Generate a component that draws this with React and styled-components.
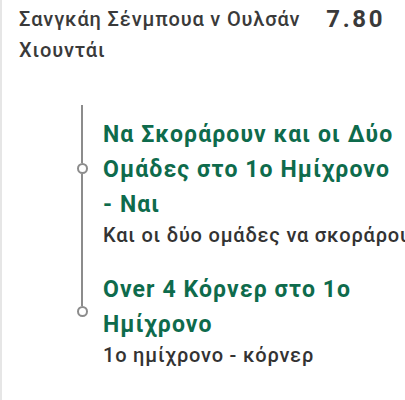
import styled, { createGlobalStyle } from 'styled-components';

const GlobalStyle = createGlobalStyle`
  html, body {
    margin: 0;
    padding: 0;
    background: #ffffff;
    overflow-x: hidden;
  }
  body {
    font-family: Roboto, "Noto Sans", "Liberation Sans", sans-serif;
  }
`;

const Page = styled.div`
  min-height: 400px;
  border-left: 2px solid #e6e6e6;
  box-sizing: border-box;
`;

const Header = styled.div`
  display: flex;
  align-items: flex-start;
  gap: 12px;
  padding: 4px 20px 0 17px;
`;

const Match = styled.div`
  flex: 1;
  font-size: 20px;
  line-height: 31px;
  letter-spacing: 0.85px;
  font-weight: 500;
  color: #3a3a3a;
`;

const Odds = styled.div`
  font-size: 24px;
  line-height: 31px;
  letter-spacing: 2.6px;
  font-weight: 700;
  color: #3a3a3a;
`;

const Timeline = styled.div`
  margin-top: 39px;
  padding-left: 75px;
`;

const Item = styled.div`
  display: grid;
  grid-template-columns: 10px 1fr;
  column-gap: 16px;
`;

const Rail = styled.div`
  display: flex;
  flex-direction: column;
  align-items: center;
`;

const Segment = styled.div`
  width: 2px;
  background: #8c8c8c;
  height: ${p => (p.$grow ? 'auto' : '58px')};
  flex: ${p => (p.$grow ? '1' : 'none')};
`;

const Dot = styled.div`
  width: 11px;
  height: 11px;
  box-sizing: border-box;
  border: 2px solid #8c8c8c;
  border-radius: 50%;
  background: #ffffff;
`;

const Body = styled.div`
  min-width: 0;
  padding-top: ${p => p.$top}px;
  padding-right: 8px;
`;

const Title = styled.div`
  font-size: 23px;
  line-height: 35px;
  letter-spacing: 1.1px;
  font-weight: 700;
  color: #0e6b4c;
`;

const Subtitle = styled.div`
  font-size: 20px;
  line-height: 26px;
  letter-spacing: 0.8px;
  font-weight: 500;
  color: #333333;
  white-space: nowrap;
  overflow: hidden;
  margin-right: -8px;
`;

const selections = [
  {
    title: 'Να Σκοράρουν και οι Δύο Ομάδες στο 1ο Ημίχρονο - Ναι',
    market: 'Και οι δύο ομάδες να σκοράρουν στο 1ο ημίχρονο',
  },
  {
    title: 'Over 4 Κόρνερ στο 1ο Ημίχρονο',
    market: '1ο ημίχρονο - κόρνερ',
  },
];

export default function App() {
  return (
    <Page>
      <GlobalStyle />
      <Header>
        <Match>Σανγκάη Σένμπουα ν Ουλσάν Χιουντάι</Match>
        <Odds>7.80</Odds>
      </Header>
      <Timeline>
        {selections.map((s, i) => {
          const last = i === selections.length - 1;
          return (
            <Item key={s.title}>
              <Rail>
                <Segment />
                <Dot />
                {!last && <Segment $grow />}
              </Rail>
              <Body $top={i === 0 ? 12 : 24}>
                <Title>{s.title}</Title>
                <Subtitle>{s.market}</Subtitle>
              </Body>
            </Item>
          );
        })}
      </Timeline>
    </Page>
  );
}
